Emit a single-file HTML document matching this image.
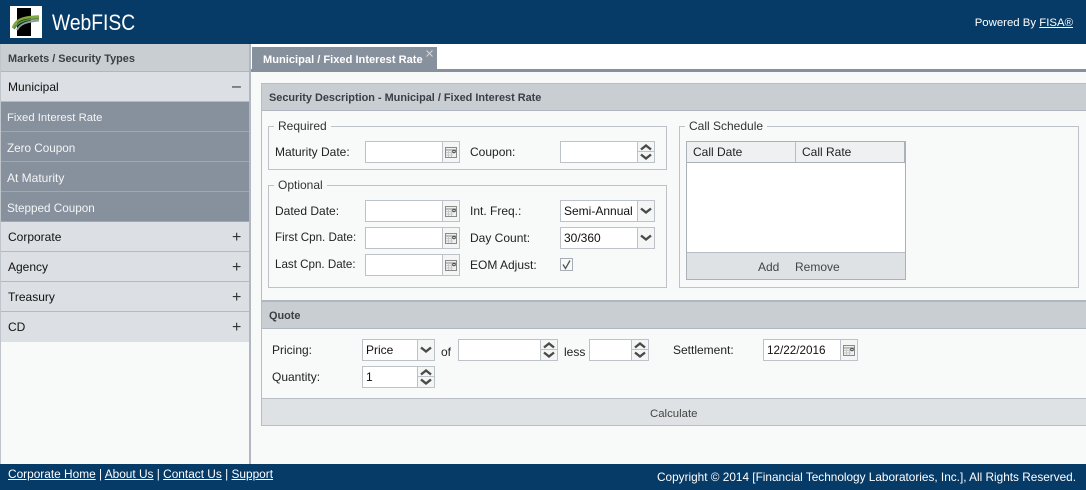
<!DOCTYPE html>
<html><head><meta charset="utf-8">
<style>
html,body{margin:0;padding:0}
body{width:1086px;height:490px;overflow:hidden;position:relative;background:#f8f9f9;font:12px/16px "Liberation Sans",sans-serif;color:#222}
div,svg{position:absolute}
.t{white-space:nowrap}
.r{left:1px;width:248px;height:29px;background:#dcdfe3;border-bottom:1px solid #b4bac1;color:#111;line-height:30px;text-indent:7px}
.s{left:1px;width:248px;height:29px;background:#87919d;border-bottom:1px solid #a0a8b1;color:#f4f5f6;line-height:33px;text-indent:6px;font-size:11.7px}
.i{color:#333;left:231px;top:1px;font-size:16px;text-indent:0}
.f{border:1px solid #bcc2c8;background:#f8f9f9;box-sizing:border-box}
.l{white-space:nowrap;color:#333;background:#f8f9f9;padding:0 4px}
.in{box-sizing:border-box;height:22px;border:1px solid #bcc2c8;background:#fff;color:#111;line-height:21px;padding-left:3px;white-space:nowrap}
.b{box-sizing:border-box;height:22px;width:18px;border:1px solid #bcc2c8;background:#f4f5f5}
.x{white-space:nowrap;color:#222}
.h{color:#3a3f45;font-weight:bold;text-indent:7px;font-size:10.9px}
</style></head><body>

<div style="left:0;top:0;width:1086px;height:44px;background:#063a67"></div>
<div style="left:10px;top:6px;width:32px;height:32px;background:#fff"></div>
<svg style="left:10px;top:6px" width="32" height="32" viewBox="0 0 32 32"><rect x="7" y="2" width="14" height="28" fill="#000"/><path d="M3 22C5 15 10 11 29 10.500" stroke="#86a63c" stroke-width="2.500" fill="none"/><path d="M4 23C7 17 12 13.500 29 12.500" stroke="#4f8f48" stroke-width="1.800" fill="none"/><path d="M7 24C10 18 16 15.500 29 14.500" stroke="#8f9c96" stroke-width="2" fill="none"/></svg>
<div class="t" style="left:52px;top:9px;font-size:22px;line-height:28px;color:#fff;transform:scaleX(.876);transform-origin:0 0">WebFISC</div>
<div class="t" style="right:13px;top:15px;color:#fff;font-size:11.4px">Powered By <u>FISA®</u></div>

<div style="left:0;top:44px;width:249px;height:420px;background:#f8f9f9;border-left:1px solid #c0c5cb;box-sizing:border-box"></div>
<div style="left:249px;top:44px;width:2px;height:420px;background:#b0b7c0"></div>
<div class="h" style="left:1px;top:44px;width:248px;height:27px;background:#c9ced3;border-bottom:1px solid #b0b7c0;line-height:30px">Markets / Security Types</div>
<div class="r" style="top:72px">Municipal<div class="i" style="top:0">–</div></div>
<div class="s" style="top:102px;font-size:11.3px">Fixed Interest Rate</div>
<div class="s" style="top:132px">Zero Coupon</div>
<div class="s" style="top:162px;font-size:12px;line-height:32px">At Maturity</div>
<div class="s" style="top:192px">Stepped Coupon</div>
<div class="r" style="top:222px">Corporate<div class="i">+</div></div>
<div class="r" style="top:252px">Agency<div class="i">+</div></div>
<div class="r" style="top:282px">Treasury<div class="i">+</div></div>
<div class="r" style="top:312px;height:30px;border:0">CD<div class="i">+</div></div>

<div style="left:251px;top:44px;width:835px;height:420px;background:#f8f9f9"></div>
<div style="left:251px;top:44px;width:835px;height:25px;background:#fff"></div>
<div style="left:252px;top:47px;width:185px;height:22px;background:#87919d"></div>
<div class="t" style="left:263px;top:52px;color:#fff;font-weight:bold;font-size:11.1px">Municipal / Fixed Interest Rate</div>
<svg style="left:425px;top:49px" width="9" height="9"><path d="M1.500 1.500L7.500 7.500M7.500 1.500L1.500 7.500" stroke="#d5d9dd" stroke-width="1"/></svg>
<div style="left:251px;top:69px;width:835px;height:3px;background:#87919d"></div>

<div style="left:261px;top:83px;width:825px;height:343px;box-sizing:border-box;border:1px solid #b8bdc4;border-right:0;background:#f8f9f9"></div>
<div class="h" style="left:262px;top:84px;width:824px;height:26px;background:#c9ced3;border-bottom:1px solid #b0b7c0;line-height:28px">Security Description - Municipal / Fixed Interest Rate</div>

<div class="f" style="left:268px;top:126px;width:399px;height:44px"></div>
<div class="l" style="left:274px;top:118px">Required</div>
<div class="x" style="left:275px;top:144px">Maturity Date:</div>
<div class="in" style="left:365px;top:141px;width:78px"></div>
<div class="b" style="left:442px;top:141px"></div>
<svg style="left:445px;top:147px" width="13" height="11"><rect x=".5" y=".5" width="11" height="10" fill="#f0f0f0" stroke="#8a8a8a"/><path d="M1 3H11" stroke="#888"/><path d="M1 5.500H8M1 8H8M3.500 3V10M6.500 3V10" stroke="#c8c8c8"/><circle cx="9" cy="4.500" r="1.300" fill="#fff" stroke="#444"/></svg>
<div class="x" style="left:470px;top:144px">Coupon:</div>
<div class="in" style="left:560px;top:141px;width:78px"></div>
<div class="b" style="left:637px;top:141px"></div>
<svg style="left:638px;top:142px" width="16" height="20"><path d="M3 7.500L8 3.500L13 7.500" stroke="#4a4a4a" stroke-width="2.400" fill="none"/><path d="M0 9.500H16" stroke="#bcc2c8"/><path d="M3 12.500L8 16.500L13 12.500" stroke="#4a4a4a" stroke-width="2.400" fill="none"/></svg>

<div class="f" style="left:268px;top:185px;width:399px;height:103px"></div>
<div class="l" style="left:274px;top:177px">Optional</div>
<div class="x" style="left:275px;top:203px">Dated Date:</div>
<div class="in" style="left:365px;top:200px;width:78px"></div>
<div class="b" style="left:442px;top:200px"></div>
<svg style="left:445px;top:206px" width="13" height="11"><rect x=".5" y=".5" width="11" height="10" fill="#f0f0f0" stroke="#8a8a8a"/><path d="M1 3H11" stroke="#888"/><path d="M1 5.500H8M1 8H8M3.500 3V10M6.500 3V10" stroke="#c8c8c8"/><circle cx="9" cy="4.500" r="1.300" fill="#fff" stroke="#444"/></svg>
<div class="x" style="left:275px;top:230px;font-size:11.6px">First Cpn. Date:</div>
<div class="in" style="left:365px;top:227px;width:78px"></div>
<div class="b" style="left:442px;top:227px"></div>
<svg style="left:445px;top:233px" width="13" height="11"><rect x=".5" y=".5" width="11" height="10" fill="#f0f0f0" stroke="#8a8a8a"/><path d="M1 3H11" stroke="#888"/><path d="M1 5.500H8M1 8H8M3.500 3V10M6.500 3V10" stroke="#c8c8c8"/><circle cx="9" cy="4.500" r="1.300" fill="#fff" stroke="#444"/></svg>
<div class="x" style="left:275px;top:257px;font-size:11.6px">Last Cpn. Date:</div>
<div class="in" style="left:365px;top:254px;width:78px"></div>
<div class="b" style="left:442px;top:254px"></div>
<svg style="left:445px;top:260px" width="13" height="11"><rect x=".5" y=".5" width="11" height="10" fill="#f0f0f0" stroke="#8a8a8a"/><path d="M1 3H11" stroke="#888"/><path d="M1 5.500H8M1 8H8M3.500 3V10M6.500 3V10" stroke="#c8c8c8"/><circle cx="9" cy="4.500" r="1.300" fill="#fff" stroke="#444"/></svg>

<div class="x" style="left:470px;top:203px">Int. Freq.:</div>
<div class="in" style="left:560px;top:200px;width:78px">Semi-Annual</div>
<div class="b" style="left:637px;top:200px"></div>
<svg style="left:638px;top:201px" width="16" height="20"><path d="M3 7.500L8 11.500L13 7.500" stroke="#4a4a4a" stroke-width="2.400" fill="none"/></svg>
<div class="x" style="left:470px;top:230px">Day Count:</div>
<div class="in" style="left:560px;top:227px;width:78px">30/360</div>
<div class="b" style="left:637px;top:227px"></div>
<svg style="left:638px;top:228px" width="16" height="20"><path d="M3 7.500L8 11.500L13 7.500" stroke="#4a4a4a" stroke-width="2.400" fill="none"/></svg>
<div class="x" style="left:470px;top:257px">EOM Adjust:</div>
<div style="left:560px;top:258px;width:13px;height:13px;box-sizing:border-box;border:1px solid #a8aeb5;background:#f8f9f9"></div>
<svg style="left:560px;top:258px" width="13" height="13"><path d="M3 6.500L5.500 10.500L10 2.500" stroke="#555" stroke-width="1.300" fill="none"/></svg>

<div class="f" style="left:679px;top:126px;width:400px;height:162px"></div>
<div class="l" style="left:685px;top:118px">Call Schedule</div>
<div style="left:686px;top:141px;width:220px;height:139px;box-sizing:border-box;border:1px solid #aab1b9;background:#fff"></div>
<div style="left:687px;top:142px;width:218px;height:20px;background:#eff0f2;border-bottom:1px solid #aab1b9"></div>
<div style="left:795px;top:142px;width:1px;height:20px;background:#b8bdc4"></div>
<div style="left:904px;top:142px;width:1px;height:20px;background:#aab1b9"></div>
<div class="x" style="left:693px;top:144px">Call Date</div>
<div class="x" style="left:802px;top:144px">Call Rate</div>
<div style="left:687px;top:252px;width:218px;height:27px;background:#dfe2e5;border-top:1px solid #b8bdc4;box-sizing:border-box"></div>
<div class="x" style="left:758px;top:259px;color:#444">Add</div>
<div class="x" style="left:795px;top:259px;color:#444">Remove</div>

<div style="left:262px;top:300px;width:824px;height:2px;background:#b0b7c0"></div>
<div class="h" style="left:262px;top:302px;width:824px;height:26px;background:#c9ced3;border-bottom:1px solid #b0b7c0;line-height:28px">Quote</div>

<div class="x" style="left:272px;top:342px">Pricing:</div>
<div class="in" style="left:362px;top:339px;width:56px">Price</div>
<div class="b" style="left:417px;top:339px"></div>
<svg style="left:418px;top:340px" width="16" height="20"><path d="M3 7.500L8 11.500L13 7.500" stroke="#4a4a4a" stroke-width="2.400" fill="none"/></svg>
<div class="x" style="left:441px;top:344px">of</div>
<div class="in" style="left:458px;top:339px;width:83px"></div>
<div class="b" style="left:540px;top:339px"></div>
<svg style="left:541px;top:340px" width="16" height="20"><path d="M3 7.500L8 3.500L13 7.500" stroke="#4a4a4a" stroke-width="2.400" fill="none"/><path d="M0 9.500H16" stroke="#bcc2c8"/><path d="M3 12.500L8 16.500L13 12.500" stroke="#4a4a4a" stroke-width="2.400" fill="none"/></svg>
<div class="x" style="left:564px;top:344px">less</div>
<div class="in" style="left:589px;top:339px;width:43px"></div>
<div class="b" style="left:631px;top:339px"></div>
<svg style="left:632px;top:340px" width="16" height="20"><path d="M3 7.500L8 3.500L13 7.500" stroke="#4a4a4a" stroke-width="2.400" fill="none"/><path d="M0 9.500H16" stroke="#bcc2c8"/><path d="M3 12.500L8 16.500L13 12.500" stroke="#4a4a4a" stroke-width="2.400" fill="none"/></svg>
<div class="x" style="left:673px;top:342px">Settlement:</div>
<div class="in" style="left:763px;top:339px;width:78px;font-size:11.7px">12/22/2016</div>
<div class="b" style="left:840px;top:339px"></div>
<svg style="left:843px;top:345px" width="13" height="11"><rect x=".5" y=".5" width="11" height="10" fill="#f0f0f0" stroke="#8a8a8a"/><path d="M1 3H11" stroke="#888"/><path d="M1 5.500H8M1 8H8M3.500 3V10M6.500 3V10" stroke="#c8c8c8"/><circle cx="9" cy="4.500" r="1.300" fill="#fff" stroke="#444"/></svg>
<div class="x" style="left:272px;top:369px">Quantity:</div>
<div class="in" style="left:362px;top:366px;width:56px">1</div>
<div class="b" style="left:417px;top:366px"></div>
<svg style="left:418px;top:367px" width="16" height="20"><path d="M3 7.500L8 3.500L13 7.500" stroke="#4a4a4a" stroke-width="2.400" fill="none"/><path d="M0 9.500H16" stroke="#bcc2c8"/><path d="M3 12.500L8 16.500L13 12.500" stroke="#4a4a4a" stroke-width="2.400" fill="none"/></svg>

<div style="left:262px;top:398px;width:824px;height:28px;box-sizing:border-box;background:#dfe2e5;border-top:1px solid #b8bdc4;border-bottom:1px solid #b8bdc4"></div>
<div class="x" style="left:650px;top:406px;color:#444;font-size:11.4px">Calculate</div>

<div style="left:0;top:464px;width:1086px;height:26px;background:#063a67"></div>
<div class="t" style="left:8px;top:466px;color:#fff;font-size:11.87px"><u>Corporate Home</u> | <u>About Us</u> | <u>Contact Us</u> | <u>Support</u></div>
<div class="t" style="right:10px;top:469px;color:#fff;font-size:11.8px">Copyright © 2014 [Financial Technology Laboratories, Inc.], All Rights Reserved.</div>
</body></html>
